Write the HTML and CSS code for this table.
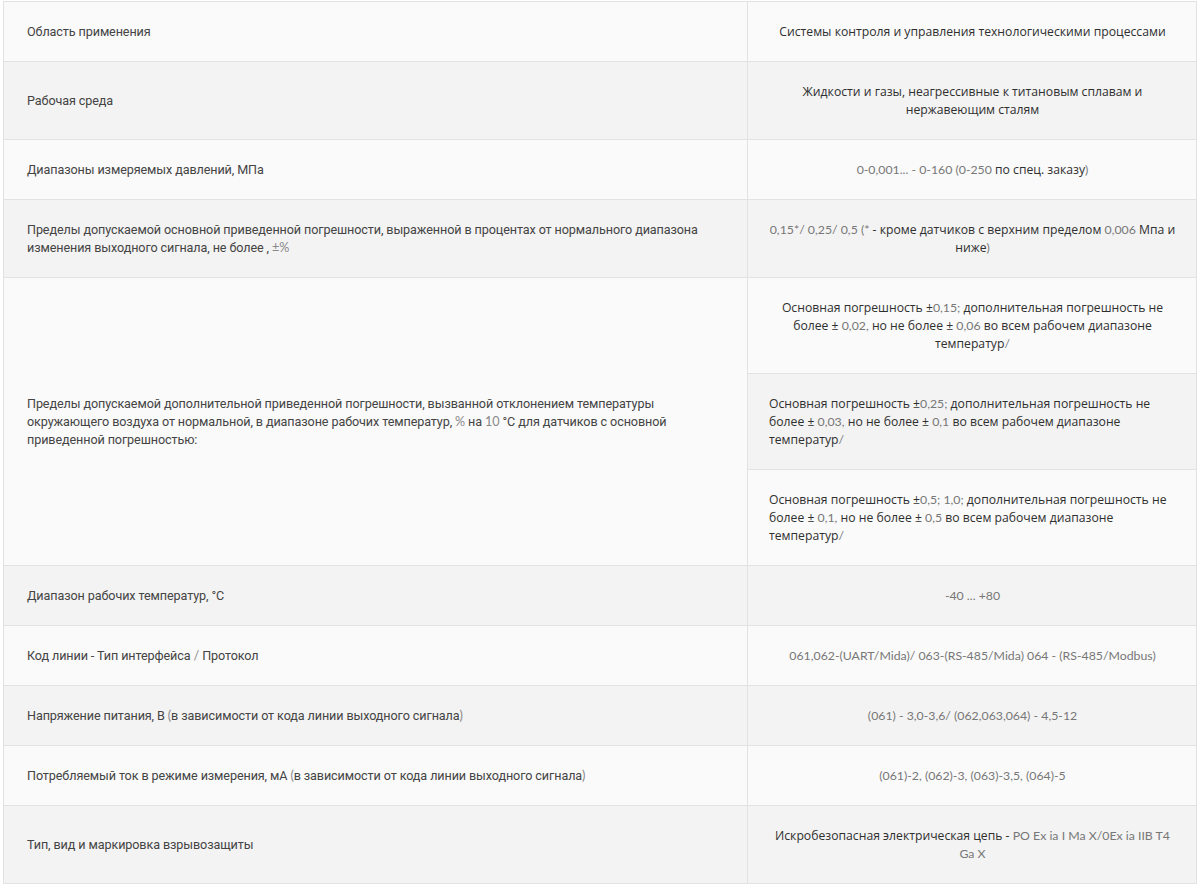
FILE: index.html
```html
<!DOCTYPE html>
<html lang="ru">
<head>
    <meta charset="UTF-8">
    <meta name="viewport" content="width=device-width, initial-scale=1.0">
    <title>Технические характеристики</title>
    <link rel="stylesheet" href="styles.css">
</head>
<body>

    <div class="specs">
        <table class="specs-table">
            <tbody>
                <tr>
                    <td class="name">Область применения</td>
                    <td class="value">Системы контроля и управления технологическими процессами</td>
                </tr>
                <tr>
                    <td class="name">Рабочая среда</td>
                    <td class="value">Жидкости и газы, неагрессивные к титановым сплавам и нержавеющим сталям</td>
                </tr>
                <tr>
                    <td class="name">Диапазоны измеряемых давлений, МПа</td>
                    <td class="value"><span class="num">0-0,001... - 0-160 (0-250</span> по спец. заказу<span class="num">)</span></td>
                </tr>
                <tr>
                    <td class="name">Пределы допускаемой основной приведенной погрешности, выраженной в процентах от нормального диапазона изменения выходного сигнала, не более , <span class="num-l">±%</span></td>
                    <td class="value"><span class="num">0,15*/ 0,25/ 0,5 (*</span> - кроме датчиков с верхним пределом <span class="num">0,006</span> Мпа и ниже<span class="num">)</span></td>
                </tr>
                <tr>
                    <td class="name merged" rowspan="3">Пределы допускаемой дополнительной приведенной погрешности, вызванной отклонением температуры окружающего воздуха от нормальной, в диапазоне рабочих температур, <span class="num-l">%</span> на <span class="num-l">10</span> °С для датчиков с основной приведенной погрешностью:</td>
                    <td class="value sub">Основная погрешность ±<span class="num">0,15;</span> дополнительная погрешность не более ± <span class="num">0,02,</span> но не более ± <span class="num">0,06</span> во всем рабочем диапазоне температур<span class="num">/</span></td>
                </tr>
                <tr>
                    <td class="value sub left">Основная погрешность ±<span class="num">0,25;</span> дополнительная погрешность не более ± <span class="num">0,03,</span> но не более ± <span class="num">0,1</span> во всем рабочем диапазоне температур<span class="num">/</span></td>
                </tr>
                <tr>
                    <td class="value sub left">Основная погрешность ±<span class="num">0,5; 1,0;</span> дополнительная погрешность не более ± <span class="num">0,1,</span> но не более ± <span class="num">0,5</span> во всем рабочем диапазоне температур<span class="num">/</span></td>
                </tr>
                <tr>
                    <td class="name">Диапазон рабочих температур, °С</td>
                    <td class="value"><span class="num">-40 ... +80</span></td>
                </tr>
                <tr>
                    <td class="name">Код линии - Тип интерфейса <span class="num-l">/</span> Протокол</td>
                    <td class="value"><span class="num">061,062-(UART/Mida)/ 063-(RS-485/Mida) 064 - (RS-485/Modbus)</span></td>
                </tr>
                <tr>
                    <td class="name">Напряжение питания, В <span class="num-l">(</span>в зависимости от кода линии выходного сигнала<span class="num-l">)</span></td>
                    <td class="value"><span class="num">(061) - 3,0-3,6/ (062,063,064) - 4,5-12</span></td>
                </tr>
                <tr>
                    <td class="name">Потребляемый ток в режиме измерения, мА <span class="num-l">(</span>в зависимости от кода линии выходного сигнала<span class="num-l">)</span></td>
                    <td class="value"><span class="num">(061)-2, (062)-3, (063)-3,5, (064)-5</span></td>
                </tr>
                <tr>
                    <td class="name">Тип, вид и маркировка взрывозащиты</td>
                    <td class="value">Искробезопасная электрическая цепь - <span class="num">PO Ex ia I Ma X/0Ex ia IIB T4 Ga X</span></td>
                </tr>
            </tbody>
        </table>
    </div>

</body>
</html>
```

FILE: styles.css
```css
* {
    margin: 0;
    padding: 0;
    box-sizing: border-box;
}

body {
    background-color: #fff;
    padding: 1px 3px 0 3px;
}

.specs-table {
    width: 1194px;
    border-collapse: collapse;
    border-right: 1px solid #cfcfcf;
}

.specs-table td {
    border: 1px solid #e2e2e2;
    padding: 21px 22px 20px 22px;
    line-height: 18px;
    font-size: 12.6px;
    vertical-align: middle;
}

.specs-table tr {
    background-color: #fafafa;
}

.specs-table tr:nth-child(even) {
    background-color: #f3f3f3;
}

.name {
    width: 744px;
    padding-left: 23px !important;
    font-family: "Roboto", "Liberation Sans", sans-serif;
    letter-spacing: -0.1px;
    color: #444;
    text-align: left;
}

.name.merged {
    background-color: #fafafa;
}

.value {
    padding-left: 21px !important;
    padding-right: 20px !important;
    font-family: "Open Sans", "DejaVu Sans", sans-serif;
    font-size: 12.2px !important;
    color: #2f2f2f;
    text-align: center;
}

.value.left {
    text-align: left;
}

.num {
    font-family: "Lato", "Liberation Sans", sans-serif;
    font-size: 12.3px;
    line-height: 1;
    color: #777;
}

.num-l {
    font-family: "Lato", "Liberation Sans", sans-serif;
    line-height: 1;
    color: #888;
}
```
